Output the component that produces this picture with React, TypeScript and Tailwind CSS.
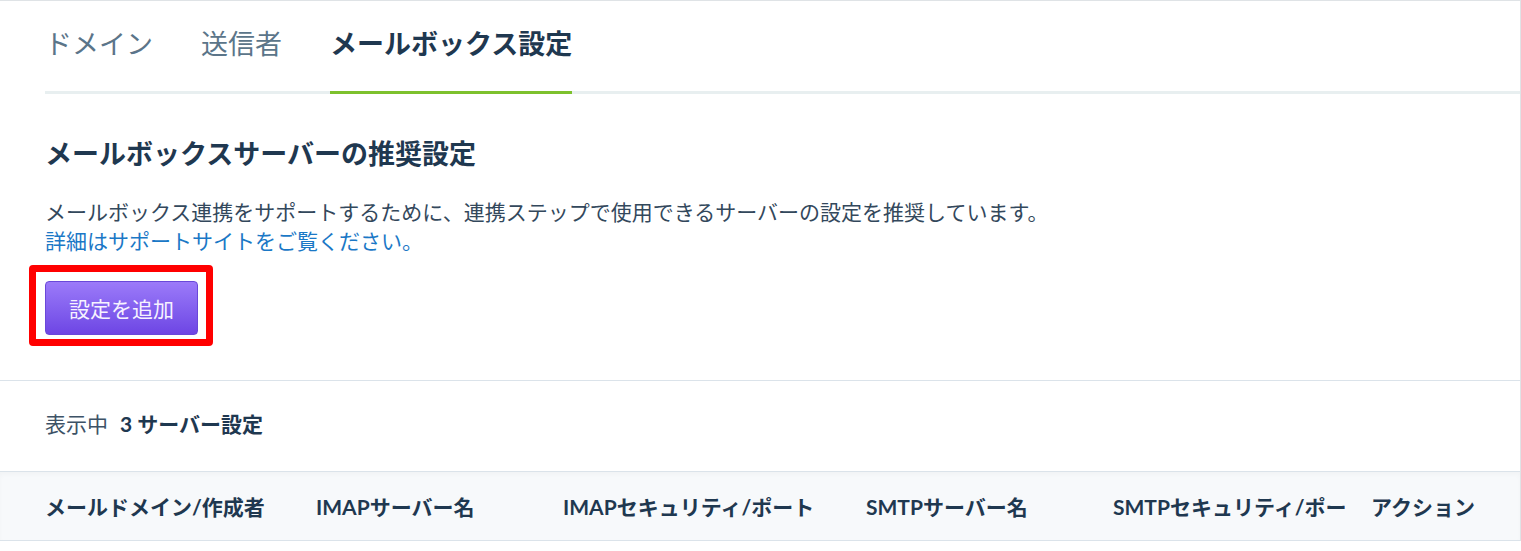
import React from 'react';

const tabs = ['ドメイン', '送信者', 'メールボックス設定'];

// clip: header cell is cut off in the original (narrow column)
const columns = [
    { label: 'メールドメイン/作成者', clip: false },
    { label: 'IMAPサーバー名', clip: false },
    { label: 'IMAPセキュリティ/ポート', clip: false },
    { label: 'SMTPサーバー名', clip: false },
    { label: 'SMTPセキュリティ/ポート', clip: true },
    { label: 'アクション', clip: false },
];

const App: React.FC = () => {
    const activeTab = 'メールボックス設定';

    return (
        <div className="min-h-screen bg-white font-['Lato','Noto_Sans_CJK_JP',sans-serif]">
            <div className="border-t border-r border-[#dfe3e6]">
                {/* Tabs */}
                <nav className="ml-[45px] pt-[25px] flex gap-[48px] border-b-[3px] border-[#e8eff0]">
                    {tabs.map((tab) => (
                        <button
                            key={tab}
                            className={`-mb-[3px] pb-[29px] border-b-[3px] text-[27px] leading-[36px] whitespace-nowrap ${tab === activeTab ? 'border-[#7dc12d] font-bold text-[#1f3850]' : 'border-transparent text-[#5b7589]'}`}
                        >
                            {tab}
                        </button>
                    ))}
                </nav>

                {/* Recommended settings */}
                <section className="px-[45px] pt-[42px] pb-[45px] border-b border-[#dbe3ea]">
                    <h2 className="text-[27px] leading-[36px] font-bold text-[#1f3850]">
                        メールボックスサーバーの推奨設定
                    </h2>
                    <p className="mt-[25px] text-[21px] leading-[29px] text-[#33485c]">
                        メールボックス連携をサポートするために、連携ステップで使用できるサーバーの設定を推奨しています。
                        <br />
                        <a className="text-[#1b78c6]">詳細はサポートサイトをご覧ください。</a>
                    </p>
                    <div className="mt-[26px] flex">
                        <div className="relative">
                            <button className="h-[54px] px-[23px] rounded-[4px] border border-[#6a48d9] bg-gradient-to-b from-[#9c7af9] to-[#6e45e4] text-[21px] leading-[29px] text-[#f6f2ff]">
                                設定を追加
                            </button>
                            {/* annotation frame */}
                            <span className="pointer-events-none absolute -left-[16px] -top-[16px] -right-[15px] -bottom-[11px] border-[7px] border-[#ff0000] rounded-[4px]" />
                        </div>
                    </div>
                </section>

                {/* Count */}
                <div className="px-[45px] pt-[28px] pb-[33px] text-[21px] leading-[29px]">
                    <span className="text-[#3d5266]">表示中</span>
                    <span className="ml-[12px] font-bold text-[#1f3850]">3 サーバー設定</span>
                </div>

                {/* Table header */}
                <div className="h-[70px] pl-[45px] grid grid-cols-[271px_247px_303px_247px_258px_1fr] items-center bg-[#f7f9fb] border-y border-[#dbe3ea] shadow-[inset_0_3px_4px_rgba(0,0,0,0.025)]">
                    {columns.map((col) => (
                        <div
                            key={col.label}
                            className={`whitespace-nowrap text-[21px] leading-[29px] font-bold text-[#1f3850] ${col.clip ? 'max-w-[232px] overflow-hidden' : ''}`}
                        >
                            {col.label}
                        </div>
                    ))}
                </div>
            </div>
        </div>
    );
};

export default App;
